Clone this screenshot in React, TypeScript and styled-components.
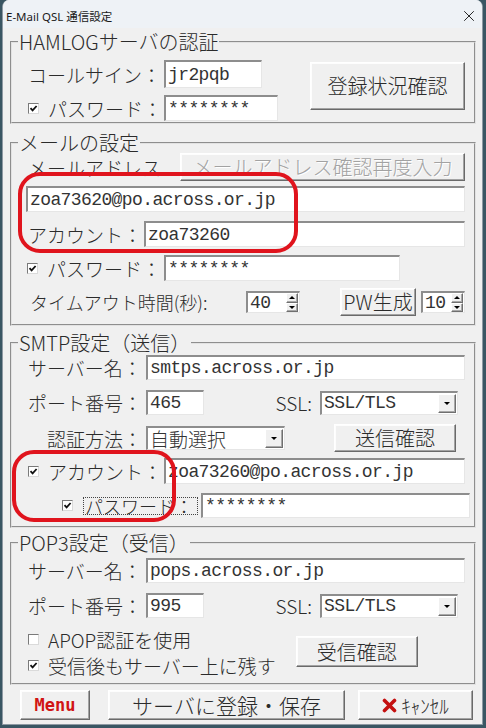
import React from 'react'
import styled, { createGlobalStyle } from 'styled-components'
import { X } from 'lucide-react'

const JP = `"Noto Sans CJK JP", "Noto Sans", sans-serif`
const MONO = `"Liberation Mono", "Noto Sans CJK JP", monospace`
const INK = '#2b2b2b'

const GlobalStyle = createGlobalStyle`
  * { box-sizing: border-box; }
  body {
    margin: 0;
    background: #3a5663;
    font-family: ${JP};
  }
`

const Window = styled.div`
  margin-left: 2px;
  width: 481px;
  height: 725px;
  background: #f0f0f0;
  border: 1px solid #8e99a3;
  border-top: none;
  border-radius: 7px 7px 0 0;
  overflow: hidden;
  display: flex;
  flex-direction: column;
`

const TitleBar = styled.div`
  flex: none;
  height: 28px;
  display: flex;
  align-items: center;
  justify-content: space-between;
  padding: 4px 4px 0 3px;
  background: #eef2f6;
  font: 11.5px "Noto Sans", ${JP};
  color: #1a1a1a;
`

const Body = styled.div`
  padding: 4px 6px 4px 7px;
  display: flex;
  flex-direction: column;
`

const Group = styled.fieldset<{ $mt: number }>`
  margin: ${(p) => p.$mt}px 0 0 0;
  padding: 0;
  min-width: 0;
  border: 2px groove #e2e2e2;
`

const Legend = styled.legend`
  margin-left: 6px;
  padding: 0 1px;
  font: 300 20px/20px ${JP};
  color: ${INK};
`

const Content = styled.div<{ $pt: number; $pb: number }>`
  display: flex;
  flex-direction: column;
  padding: ${(p) => p.$pt}px 0 ${(p) => p.$pb}px 0;
`

const Row = styled.div<{ $h: number; $mt?: number; $pl?: number }>`
  display: flex;
  align-items: center;
  height: ${(p) => p.$h}px;
  margin-top: ${(p) => p.$mt ?? 0}px;
  padding-left: ${(p) => p.$pl ?? 0}px;
`

const Split = styled.div<{ $mt?: number }>`
  display: flex;
  align-items: flex-start;
  margin-top: ${(p) => p.$mt ?? 0}px;
`

const Column = styled.div<{ $gap: number }>`
  display: flex;
  flex-direction: column;
  gap: ${(p) => p.$gap}px;
`

const Label = styled.span<{ $w?: number; $right?: number; $size?: number }>`
  flex: none;
  width: ${(p) => (p.$w ? `${p.$w}px` : 'auto')};
  padding-right: ${(p) => p.$right ?? 0}px;
  text-align: ${(p) => (p.$right ? 'right' : 'left')};
  font: 300 ${(p) => p.$size ?? 19}px/1 ${JP};
  color: ${INK};
  white-space: nowrap;
`

const FocusLabel = styled.span`
  flex: none;
  width: 115px;
  height: 18px;
  margin-left: 5px;
  display: flex;
  align-items: center;
  padding-left: 1px;
  border: 1px dotted #444;
  font: 300 18px/1 ${JP};
  color: ${INK};
  white-space: nowrap;
`

const TextBox = styled.div<{ $w: number; $h?: number; $ml?: number }>`
  flex: none;
  width: ${(p) => p.$w}px;
  height: ${(p) => (p.$h ? `${p.$h}px` : '100%')};
  margin-left: ${(p) => p.$ml ?? 0}px;
  display: flex;
  align-items: center;
  padding-left: 2px;
  background: #fff;
  border-top: 2px solid #8d8d8d;
  border-left: 2px solid #8d8d8d;
  border-right: 1px solid #e6e6e6;
  border-bottom: 1px solid #e6e6e6;
  font: 18px/1 ${MONO};
  letter-spacing: -0.6px;
  color: #333;
  white-space: nowrap;
`

const Value = styled.span<{ $jp?: boolean }>`
  flex: 1;
  font: ${(p) => (p.$jp ? `300 19px/1 ${JP}` : 'inherit')};
  letter-spacing: ${(p) => (p.$jp ? '0' : 'inherit')};
`

const Raised = styled.span`
  display: flex;
  align-items: center;
  justify-content: center;
  background: #f0f0f0;
  border: 1px solid;
  border-color: #fff #6f6f6f #6f6f6f #fff;
  box-shadow: inset -1px -1px 0 #a8a8a8;
`

const DropButton = styled(Raised)`
  flex: none;
  width: 18px;
  height: calc(100% - 2px);
  margin-right: 1px;
`

const SpinColumn = styled.span`
  flex: none;
  width: 12px;
  height: 100%;
  display: flex;
  flex-direction: column;
  margin-right: 1px;
`

const SpinButton = styled(Raised)`
  flex: 1;
`

const Arrow = styled.span<{ $up?: boolean }>`
  width: 0;
  height: 0;
  border-left: 3px solid transparent;
  border-right: 3px solid transparent;
  ${(p) => (p.$up ? 'border-bottom' : 'border-top')}: 3px solid #000;
`

const Button = styled.div<{
  $w: number
  $h: number
  $ml?: number
  $mr?: number
  $mt?: number
  $size?: number
  $disabled?: boolean
}>`
  flex: none;
  width: ${(p) => p.$w}px;
  height: ${(p) => p.$h}px;
  margin: ${(p) => p.$mt ?? 0}px ${(p) => p.$mr ?? 0}px 0 ${(p) => p.$ml ?? 0}px;
  display: flex;
  align-items: center;
  justify-content: center;
  gap: 4px;
  background: #f0f0f0;
  border: 1px solid;
  border-color: #fff #6a6a6a #6a6a6a #fff;
  box-shadow: inset -1px -1px 0 #a3a3a3, inset 1px 1px 0 #fdfdfd;
  font: 300 ${(p) => p.$size ?? 20}px/1 ${JP};
  color: ${(p) => (p.$disabled ? '#a2a2a2' : INK)};
  text-shadow: ${(p) => (p.$disabled ? '1px 1px 0 #fff' : 'none')};
  white-space: nowrap;
`

const MenuText = styled.span`
  font: bold 17px/1 "DejaVu Sans Mono", ${MONO};
  color: #d11414;
`

const CancelText = styled.span`
  font: 300 19px/1 ${JP};
  color: ${INK};
`

const Box = styled.span<{ $mr: number }>`
  flex: none;
  width: 11px;
  height: 11px;
  margin-right: ${(p) => p.$mr}px;
  display: flex;
  align-items: center;
  justify-content: center;
  background: #fff;
  border-top: 1px solid #7a7a7a;
  border-left: 1px solid #7a7a7a;
  border-right: 1px solid #dadada;
  border-bottom: 1px solid #dadada;
`

const Highlight = styled.div<{ $top: number; $bottom: number; $left: number; $width: number; $mt: number }>`
  position: relative;
  margin-top: ${(p) => p.$mt}px;
  &::after {
    content: '';
    position: absolute;
    top: -${(p) => p.$top}px;
    bottom: -${(p) => p.$bottom}px;
    left: ${(p) => p.$left}px;
    width: ${(p) => p.$width}px;
    border: 4px solid #e0141d;
    border-radius: 22px;
    pointer-events: none;
  }
`

const Footer = styled.div`
  display: flex;
  align-items: center;
  height: 30px;
  margin-top: 5px;
  padding-left: 10px;
`

const Check = ({ on = true, mr = 9 }: { on?: boolean; mr?: number }) => (
  <Box $mr={mr}>
    {on && (
      <svg width="9" height="9" viewBox="0 0 9 9">
        <path d="M1.5 4.2 L3.6 6.4 L7.6 2" fill="none" stroke="#111" strokeWidth="1.8" />
      </svg>
    )}
  </Box>
)

const Combo = ({ w, h, children, jp }: { w: number; h: number; children: string; jp?: boolean }) => (
  <TextBox $w={w} $h={h}>
    <Value $jp={jp}>{children}</Value>
    <DropButton>
      <Arrow />
    </DropButton>
  </TextBox>
)

const Spinner = ({ w, ml, children }: { w: number; ml?: number; children: string }) => (
  <TextBox $w={w} $h={22} $ml={ml}>
    <Value>{children}</Value>
    <SpinColumn>
      <SpinButton>
        <Arrow $up />
      </SpinButton>
      <SpinButton>
        <Arrow />
      </SpinButton>
    </SpinColumn>
  </TextBox>
)

const CancelMark = () => (
  <svg width="15" height="15" viewBox="0 0 15 15">
    <path d="M2.5 2.5 L12.5 12.5 M12.5 2.5 L2.5 12.5" stroke="#c41010" strokeWidth="3.6" strokeLinecap="round" />
  </svg>
)

const App = () => (
  <>
    <GlobalStyle />
    <Window>
      <TitleBar>
        <span>E-Mail QSL 通信設定</span>
        <X size={18} strokeWidth={1.3} color="#222" />
      </TitleBar>
      <Body>
        <Group $mt={0}>
          <Legend>HAMLOGサーバの認証</Legend>
          <Content $pt={8} $pb={1}>
            <Split>
              <Column $gap={7}>
                <Row $h={28} $pl={16}>
                  <Label $w={136}>コールサイン：</Label>
                  <TextBox $w={98}>jr2pqb</TextBox>
                </Row>
                <Row $h={26} $pl={16}>
                  <Check />
                  <Label $w={116}>パスワード：</Label>
                  <TextBox $w={114}>********</TextBox>
                </Row>
              </Column>
              <Button $w={155} $h={48} $mt={2} $ml={32}>
                登録状況確認
              </Button>
            </Split>
          </Content>
        </Group>

        <Group $mt={9}>
          <Legend>メールの設定</Legend>
          <Content $pt={0} $pb={8}>
            <Row $h={28} $pl={16}>
              <Label $w={152}>メールアドレス</Label>
              <Button $w={285} $h={28} $disabled>
                メールアドレス確認再度入力
              </Button>
            </Row>
            <Highlight $mt={5} $top={14} $bottom={6} $left={6} $width={272}>
              <Row $h={26} $pl={14}>
                <TextBox $w={439}>zoa73620@po.across.or.jp</TextBox>
              </Row>
              <Row $h={26} $mt={9} $pl={16}>
                <Label $w={116}>アカウント：</Label>
                <TextBox $w={321}>zoa73260</TextBox>
              </Row>
            </Highlight>
            <Row $h={26} $mt={8} $pl={15}>
              <Check />
              <Label $w={117}>パスワード：</Label>
              <TextBox $w={236}>********</TextBox>
            </Row>
            <Row $h={28} $mt={7} $pl={18}>
              <Label $w={216} $size={18}>
                タイムアウト時間(秒):
              </Label>
              <Spinner w={54}>40</Spinner>
              <Button $w={76} $h={28} $ml={40}>
                PW生成
              </Button>
              <Spinner w={44} ml={5}>
                10
              </Spinner>
            </Row>
          </Content>
        </Group>

        <Group $mt={7}>
          <Legend>SMTP設定（送信）</Legend>
          <Content $pt={2} $pb={8}>
            <Row $h={25} $pl={16}>
              <Label $w={118}>サーバー名：</Label>
              <TextBox $w={319}>smtps.across.or.jp</TextBox>
            </Row>
            <Row $h={25} $mt={10} $pl={16}>
              <Label $w={118}>ポート番号：</Label>
              <TextBox $w={58}>465</TextBox>
              <Label $w={116} $right={8}>
                SSL:
              </Label>
              <Combo w={138} h={24}>
                SSL/TLS
              </Combo>
            </Row>
            <Row $h={28} $mt={9} $pl={16}>
              <Label $w={118} $right={4}>
                認証方法：
              </Label>
              <Combo w={139} h={24} jp>
                自動選択
              </Combo>
              <Button $w={122} $h={28} $ml={49}>
                送信確認
              </Button>
            </Row>
            <Highlight $mt={6} $top={8} $bottom={4} $left={0} $width={156}>
              <Row $h={26} $pl={16}>
                <Check />
                <Label $w={116}>アカウント：</Label>
                <TextBox $w={301}>zoa73260@po.across.or.jp</TextBox>
              </Row>
              <Row $h={25} $mt={9} $pl={50}>
                <Check mr={5} />
                <FocusLabel>パスワード：</FocusLabel>
                <TextBox $w={269} $ml={3}>
                  ********
                </TextBox>
              </Row>
            </Highlight>
          </Content>
        </Group>

        <Group $mt={5}>
          <Legend>POP3設定（受信）</Legend>
          <Content $pt={5} $pb={6}>
            <Row $h={25} $pl={16}>
              <Label $w={118}>サーバー名：</Label>
              <TextBox $w={319}>pops.across.or.jp</TextBox>
            </Row>
            <Row $h={25} $mt={10} $pl={16}>
              <Label $w={118}>ポート番号：</Label>
              <TextBox $w={58}>995</TextBox>
              <Label $w={116} $right={8}>
                SSL:
              </Label>
              <Combo w={138} h={24}>
                SSL/TLS
              </Combo>
            </Row>
            <Split $mt={9}>
              <Column $gap={2}>
                <Row $h={24} $pl={16}>
                  <Check on={false} />
                  <Label>APOP認証を使用</Label>
                </Row>
                <Row $h={24} $pl={16}>
                  <Check />
                  <Label>受信後もサーバー上に残す</Label>
                </Row>
              </Column>
              <Button $w={122} $h={31} $mt={9} $ml={20}>
                受信確認
              </Button>
            </Split>
          </Content>
        </Group>

        <Footer>
          <Button $w={70} $h={30}>
            <MenuText>Menu</MenuText>
          </Button>
          <Button $w={237} $h={30} $ml={18} $size={21}>
            サーバに登録・保存
          </Button>
          <Button $w={115} $h={30} $ml={13}>
            <CancelMark />
            <CancelText>ｷｬﾝｾﾙ</CancelText>
          </Button>
        </Footer>
      </Body>
    </Window>
  </>
)

export default App
